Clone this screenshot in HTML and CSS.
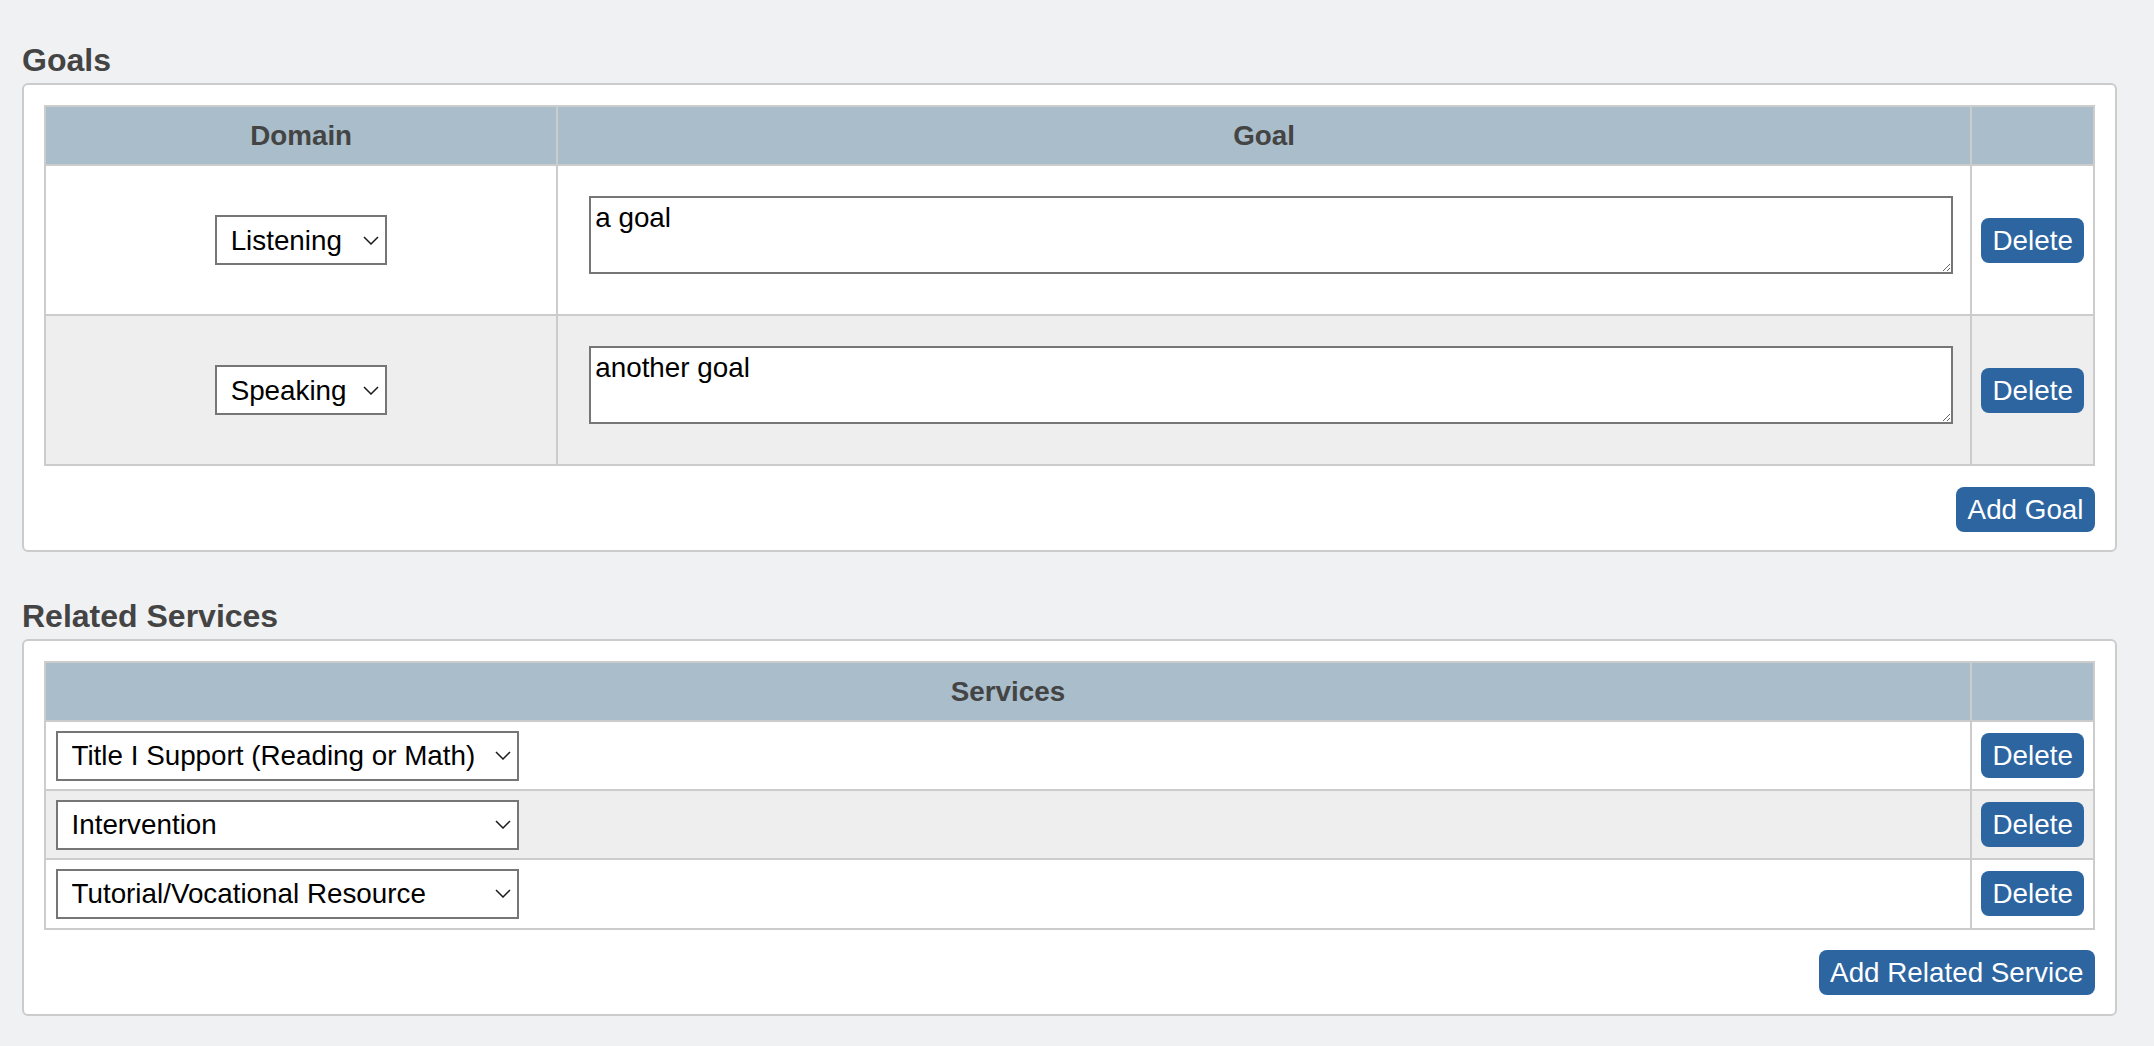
FILE: index.html
```html
<!DOCTYPE html>
<html lang="en">
<head>
<meta charset="utf-8">
<title>Goals and Related Services</title>
<link rel="stylesheet" href="styles.css">
</head>
<body>
<div class="page">
  <section class="section">
    <h2 class="section-title">Goals</h2>
    <div class="panel">
      <table class="grid">
        <colgroup><col class="col-domain"><col><col class="col-action"></colgroup>
        <thead>
          <tr><th>Domain</th><th>Goal</th><th></th></tr>
        </thead>
        <tbody>
          <tr>
            <td class="cell-domain">
              <span class="select-wrap">
                <select class="select select-domain">
                  <option selected>Listening</option>
                  <option>Speaking</option>
                  <option>Reading</option>
                  <option>Writing</option>
                </select>
                <svg class="chevron" width="16" height="9" viewBox="0 0 16 9"><polyline points="1,1 8,8 15,1" fill="none" stroke="#1a1a1a" stroke-width="1.5"/></svg>
              </span>
            </td>
            <td class="cell-goal"><textarea class="goal-text">a goal</textarea></td>
            <td class="cell-action"><button class="btn">Delete</button></td>
          </tr>
          <tr>
            <td class="cell-domain">
              <span class="select-wrap">
                <select class="select select-domain">
                  <option>Listening</option>
                  <option selected>Speaking</option>
                  <option>Reading</option>
                  <option>Writing</option>
                </select>
                <svg class="chevron" width="16" height="9" viewBox="0 0 16 9"><polyline points="1,1 8,8 15,1" fill="none" stroke="#1a1a1a" stroke-width="1.5"/></svg>
              </span>
            </td>
            <td class="cell-goal"><textarea class="goal-text">another goal</textarea></td>
            <td class="cell-action"><button class="btn">Delete</button></td>
          </tr>
        </tbody>
      </table>
      <div class="panel-actions"><button class="btn">Add Goal</button></div>
    </div>
  </section>

  <section class="section">
    <h2 class="section-title">Related Services</h2>
    <div class="panel">
      <table class="grid">
        <colgroup><col><col class="col-action"></colgroup>
        <thead>
          <tr><th>Services</th><th></th></tr>
        </thead>
        <tbody>
          <tr>
            <td class="cell-service">
              <span class="select-wrap">
                <select class="select select-service">
                  <option selected>Title I Support (Reading or Math)</option>
                  <option>Intervention</option>
                  <option>Tutorial/Vocational Resource</option>
                </select>
                <svg class="chevron" width="16" height="9" viewBox="0 0 16 9"><polyline points="1,1 8,8 15,1" fill="none" stroke="#1a1a1a" stroke-width="1.5"/></svg>
              </span>
            </td>
            <td class="cell-action"><button class="btn">Delete</button></td>
          </tr>
          <tr>
            <td class="cell-service">
              <span class="select-wrap">
                <select class="select select-service">
                  <option>Title I Support (Reading or Math)</option>
                  <option selected>Intervention</option>
                  <option>Tutorial/Vocational Resource</option>
                </select>
                <svg class="chevron" width="16" height="9" viewBox="0 0 16 9"><polyline points="1,1 8,8 15,1" fill="none" stroke="#1a1a1a" stroke-width="1.5"/></svg>
              </span>
            </td>
            <td class="cell-action"><button class="btn">Delete</button></td>
          </tr>
          <tr>
            <td class="cell-service">
              <span class="select-wrap">
                <select class="select select-service">
                  <option>Title I Support (Reading or Math)</option>
                  <option>Intervention</option>
                  <option selected>Tutorial/Vocational Resource</option>
                </select>
                <svg class="chevron" width="16" height="9" viewBox="0 0 16 9"><polyline points="1,1 8,8 15,1" fill="none" stroke="#1a1a1a" stroke-width="1.5"/></svg>
              </span>
            </td>
            <td class="cell-action"><button class="btn">Delete</button></td>
          </tr>
        </tbody>
      </table>
      <div class="panel-actions"><button class="btn">Add Related Service</button></div>
    </div>
  </section>
</div>
</body>
</html>
```

FILE: styles.css
```css
html, body {
  margin: 0;
  background: #f0f1f3;
}

body {
  padding: 42px 37px 0 22px;
  font-family: "Liberation Sans", Arial, sans-serif;
  font-size: 27.8px;
  color: #000;
}

.page {
  display: flex;
  flex-direction: column;
  gap: 46px;
}

.section-title {
  margin: 0 0 5px;
  font-size: 32px;
  line-height: 36px;
  font-weight: bold;
  color: #444;
}

.panel {
  background: #fff;
  border: 2px solid #cccccc;
  border-radius: 6px;
  padding: 20px 20px 18.5px;
}

.grid {
  width: 100%;
  table-layout: fixed;
  border-collapse: separate;
  border-spacing: 0;
  border-top: 2px solid #cccccc;
  border-left: 2px solid #cccccc;
}

.col-domain { width: 25%; }
.col-action { width: 123px; }

.grid th,
.grid td {
  border-right: 2px solid #cccccc;
  border-bottom: 2px solid #cccccc;
}

.grid th {
  background: #a9bdca;
  color: #444;
  font-weight: bold;
  font-size: 27.8px;
  line-height: 31px;
  padding: 13px;
  text-align: center;
}

.grid tbody tr:nth-child(even) td {
  background: #eeeeee;
}

.cell-domain {
  text-align: center;
  vertical-align: middle;
  padding: 0;
  font-size: 0;
  line-height: 0;
}

.cell-goal {
  padding: 29.5px 17px 40.5px 31px;
  vertical-align: top;
}

.cell-action {
  vertical-align: middle;
  padding: 0 9px;
  font-size: 0;
  line-height: 0;
  text-align: left;
}

.cell-service {
  padding: 8.6px 10px;
  vertical-align: middle;
  font-size: 0;
  line-height: 0;
}

.select-wrap {
  position: relative;
  display: inline-block;
  vertical-align: top;
}

.select {
  display: block;
  -webkit-appearance: none;
  appearance: none;
  box-sizing: border-box;
  height: 50px;
  margin: 0;
  padding: 0 32px 0 13.5px;
  border: 2px solid #767676;
  border-radius: 0;
  background: #fff;
  color: #000;
  font-family: "Liberation Sans", Arial, sans-serif;
  font-size: 27.8px;
  line-height: normal;
}

.select-domain { width: 172px; }
.select-service { width: 463px; }

.chevron {
  position: absolute;
  right: 8px;
  top: 50%;
  margin-top: -4.5px;
  pointer-events: none;
}

.goal-text {
  display: block;
  box-sizing: border-box;
  width: 100%;
  height: 78px;
  margin: 0;
  padding: 4px;
  border: 2px solid #767676;
  border-radius: 0;
  background: #fff;
  color: #000;
  font-family: "Liberation Sans", Arial, sans-serif;
  font-size: 27.8px;
  line-height: normal;
}

.btn {
  display: inline-block;
  vertical-align: top;
  margin: 0;
  padding: 7px 11.5px;
  border: 0;
  border-radius: 8px;
  background: #2c65a0;
  color: #fff;
  font-family: "Liberation Sans", Arial, sans-serif;
  font-size: 27.8px;
  line-height: 31px;
  white-space: nowrap;
}

.panel-actions {
  display: flex;
  justify-content: flex-end;
  margin-top: 20.5px;
}
```
